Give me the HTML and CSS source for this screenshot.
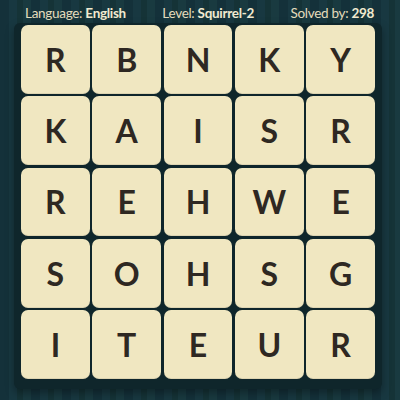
FILE: index.html
```html
<!DOCTYPE html>
<html>
<head>
<meta charset="utf-8">
<link rel="stylesheet" href="styles.css">
</head>
<body>
<div class="page">
  <div class="header">
    <span class="item">Language: <b>English</b></span>
    <span class="item">Level: <b>Squirrel-2</b></span>
    <span class="item">Solved by: <b>298</b></span>
  </div>
  <div class="board">
    <div class="grid">
      <div class="tile">R</div><div class="tile">B</div><div class="tile">N</div><div class="tile">K</div><div class="tile">Y</div>
      <div class="tile">K</div><div class="tile">A</div><div class="tile">I</div><div class="tile">S</div><div class="tile">R</div>
      <div class="tile">R</div><div class="tile">E</div><div class="tile">H</div><div class="tile">W</div><div class="tile">E</div>
      <div class="tile">S</div><div class="tile">O</div><div class="tile">H</div><div class="tile">S</div><div class="tile">G</div>
      <div class="tile">I</div><div class="tile">T</div><div class="tile">E</div><div class="tile">U</div><div class="tile">R</div>
    </div>
  </div>
</div>
</body>
</html>
```
FILE: styles.css
```css
html, body {
  margin: 0;
  padding: 0;
}
body {
  width: 400px;
  height: 400px;
  overflow: hidden;
  background: repeating-linear-gradient(90deg,
    #14313a 0px, #14313a 9px,
    #183841 9px, #183841 17px,
    #153337 17px, #153337 23px,
    #193a40 23px, #193a40 31px);
  font-family: Lato, "Open Sans", sans-serif;
}
.page {
  display: flex;
  flex-direction: column;
}
.header {
  height: 20px;
  display: flex;
  justify-content: space-between;
  align-items: center;
  padding: 3px 26px 0 25px;
  font-size: 13.5px;
  letter-spacing: -0.3px;
  color: #e4dcbc;
  line-height: 20px;
}
.header b {
  font-weight: 700;
  color: #f1ead0;
}
.board {
  margin: 0 18px 0 14px;
  padding: 2px 7px 10px 7px;
  background: #0f262b;
  border-radius: 6px;
  box-shadow: 0 4px 8px rgba(0, 0, 0, 0.35);
}
.grid {
  display: grid;
  grid-template-columns: repeat(5, 1fr);
  grid-auto-rows: 68.8px;
  gap: 2.5px;
}
.tile {
  background: #f0e7c1;
  border-radius: 7px;
  display: flex;
  align-items: center;
  justify-content: center;
  font-size: 32px;
  font-weight: 700;
  color: #2e2822;
  box-shadow: inset 0 -1px 0 rgba(0,0,0,0.08);
}
```
